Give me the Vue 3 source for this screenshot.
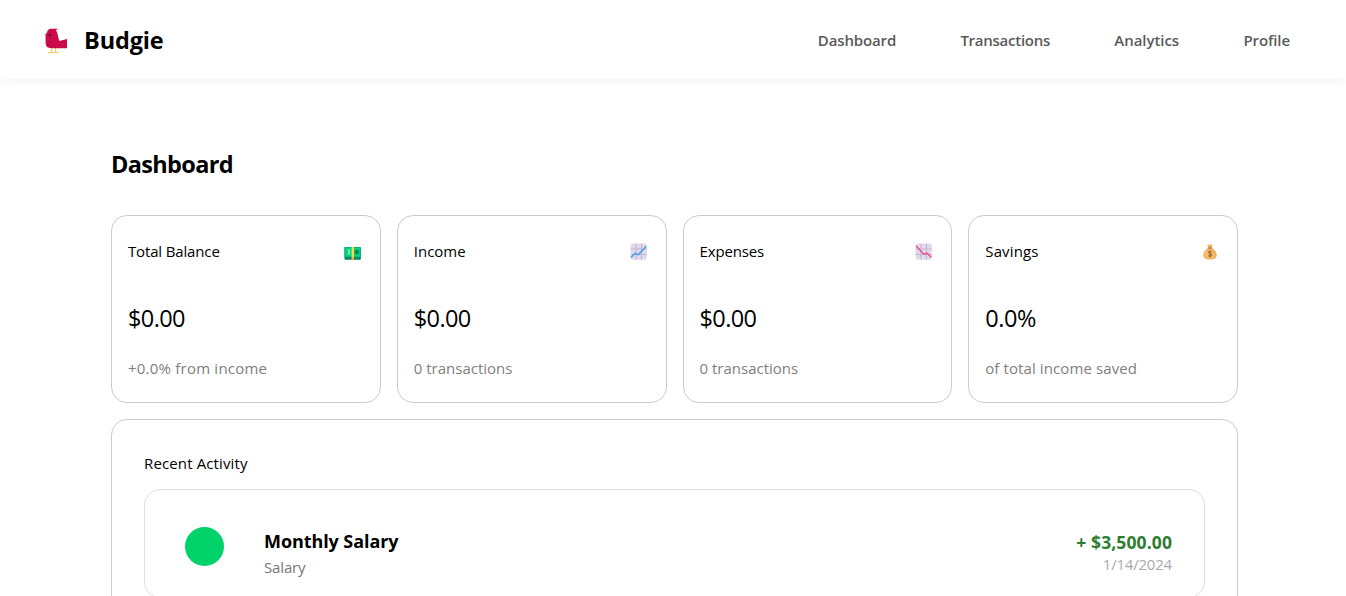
<script setup>
const links = [
  { label: 'Dashboard', cls: 'n-dashboard' },
  { label: 'Transactions', cls: 'n-transactions' },
  { label: 'Analytics', cls: 'n-analytics' },
  { label: 'Profile', cls: 'n-profile' },
]
const stats = [
  { title: 'Total Balance', value: '$0.00', note: '+0.0% from income', icon: 'cash' },
  { title: 'Income', value: '$0.00', note: '0 transactions', icon: 'up' },
  { title: 'Expenses', value: '$0.00', note: '0 transactions', icon: 'down' },
  { title: 'Savings', value: '0.0%', note: 'of total income saved', icon: 'bag' },
]
</script>

<template>
  <div class="page">
    <header class="topbar">
      <div class="brand">
        <svg class="logo" width="26" height="26" viewBox="0 0 26 26">
          <path d="M7.5 20V24.3M11.5 20V24.3M4 24.5H14.5" stroke="#ffc65c" stroke-width="1.2" fill="none" />
          <path d="M0.4 6.8L3.2 5V9Z" fill="#f5b04c" />
          <path d="M4 2.2Q5 .8 7 .8H14.3Q12.4 1.4 12.1 2.6Q13.4 4.5 14 8L15.2 13L23 11V19.5Q23 20.3 22.3 20.3H8.5Q2 20.3 1.6 15.4V8Q1.5 5.3 3.3 4.3Q3 2.8 4 2.2Z" fill="#cb0b49" />
          <circle cx="5.7" cy="7.3" r="1" fill="#391526" />
        </svg>
        <span class="brand-name">Budgie</span>
      </div>
      <nav class="nav">
        <a v-for="l in links" :key="l.label" :class="l.cls">{{ l.label }}</a>
      </nav>
    </header>

    <main class="content">
      <h1 class="title">Dashboard</h1>
      <section class="stats">
        <article v-for="s in stats" :key="s.title" class="card" :class="s.icon">
          <div class="card-head">
            <span class="label">{{ s.title }}</span>
            <svg class="icon" width="18" height="18" viewBox="0 0 18 18">
              <g v-if="s.icon === 'cash'">
                <rect x=".5" y="3" width="16.3" height="12.8" rx=".8" fill="#008463" />
                <rect x=".5" y="3" width="16.3" height="10.2" rx=".8" fill="#00b77b" />
                <rect x="1.5" y="4" width="14.3" height="8.2" fill="#00d983" />
                <circle cx="12.8" cy="8" r="2.4" fill="#008463" />
                <path d="M6.2 6.3C4.4 5.6 3.7 7.7 5.1 8.3S5.5 10.5 3.8 9.9M5 5.5V10.9" stroke="#8df5c3" stroke-width=".9" fill="none" />
                <rect x="7.6" y="3" width="2.4" height="10.2" fill="#fcd53f" />
                <rect x="7.6" y="13" width="2.4" height="2.8" fill="#f5b83d" />
              </g>
              <g v-else-if="s.icon === 'bag'">
                <path d="M6.2 1.5Q7.5 2.2 9 1.2Q10.5 2.2 11.8 1.5L10.8 4.7Q16 8.3 15.8 12.3Q15.5 16.5 9 16.5T2.2 12.3Q2 8.3 7.2 4.7Z" fill="#f0b060" />
                <path d="M3 12Q3.5 8 7.8 6.2Q12 7 13 12Q13 15 9 15.3Q4 15.2 3 12Z" fill="#f9c86c" fill-opacity=".6" />
                <path d="M7 5H11" stroke="#a56953" stroke-width="1" />
                <path d="M10.7 9C9.8 8 7.4 8 7.4 9.4C7.4 11.1 10.7 10.3 10.7 12.1C10.7 13.5 8.1 13.6 7.2 12.6M9 7.4V14.2" stroke="#8b513c" stroke-width=".9" fill="none" />
              </g>
              <g v-else>
                <rect x=".6" y=".6" width="16.2" height="16.2" rx="2.4" fill="#e1d8ec" />
                <path d="M6 .6V16.8M11.5 .6V16.8M.6 6H16.8M.6 11.5H16.8" stroke="#c2b2d0" stroke-width=".9" />
                <path v-if="s.icon === 'up'" d="M1 14.5L4.9 10.6Q5.5 10.2 6.1 10.6L7.5 11.5Q8.2 11.8 8.8 11.2L16.2 3.3" stroke="#3f9fe5" stroke-width="1.4" fill="none" />
                <path v-else d="M1.2 3L8.2 10.6Q8.8 11.3 9.5 11L11.2 10.2Q11.9 9.9 12.5 10.5L16.2 14.3" stroke="#f1467a" stroke-width="1.4" fill="none" />
              </g>
            </svg>
          </div>
          <div class="value">{{ s.value }}</div>
          <div class="note">{{ s.note }}</div>
        </article>
      </section>

      <section class="activity">
        <div class="activity-title">Recent Activity</div>
        <div class="entry">
          <div class="dot"></div>
          <div class="entry-info">
            <div class="entry-name">Monthly Salary</div>
            <div class="entry-cat">Salary</div>
          </div>
          <div class="entry-amount">
            <div class="amount">+ $3,500.00</div>
            <div class="date">1/14/2024</div>
          </div>
        </div>
      </section>
    </main>
  </div>
</template>

<style>
html, body { margin: 0; background: #fff; overflow: hidden; }
</style>

<style scoped>
.page {
  height: 596px;
  overflow: hidden;
  font-family: "Open Sans", "Noto Sans", sans-serif;
  font-size: 15px;
  line-height: 21px;
  color: #000;
}
.topbar {
  height: 79px;
  box-sizing: border-box;
  padding: 0 56px 0 44px;
  display: flex;
  align-items: center;
  justify-content: space-between;
  box-shadow: 0 2px 10px rgba(0, 0, 0, .05);
}
.brand { display: flex; align-items: center; gap: 14px; }
.logo { display: block; margin-top: 2px; }
.brand-name { font-size: 23.5px; font-weight: 700; line-height: 32px; letter-spacing: -.15px; }
.nav { display: flex; gap: 64.3px; font-weight: 600; color: #5a5a5a; padding-top: 2px; }
.n-dashboard { letter-spacing: -.14px; }
.n-transactions { letter-spacing: -.26px; }
.n-analytics { letter-spacing: -.05px; }
.n-profile { letter-spacing: -.1px; }
.content { padding: 69px 108px 0 111px; }
.title { margin: 0; font-size: 23.5px; line-height: 32px; font-weight: 700; letter-spacing: -.65px; }
.stats { display: grid; grid-template-columns: repeat(4, 1fr); gap: 16px; margin-top: 35px; }
.card {
  box-sizing: border-box;
  height: 188px;
  border: 1px solid #ccc;
  border-radius: 16px;
  padding: 25px 18px 0 16px;
}
.card-head { display: flex; justify-content: space-between; }
.icon { display: block; margin-top: 2px; }
.cash .icon { margin-top: 3px; }
.cash .label, .down .label { letter-spacing: -.15px; }
.bag .label { letter-spacing: .15px; }
.value { font-size: 23.5px; line-height: 32px; margin-top: 40px; letter-spacing: -.6px; }
.bag .value { letter-spacing: -.4px; }
.note { color: #808080; margin-top: 24px; }
.cash .note { letter-spacing: .22px; }
.bag .note { letter-spacing: .1px; }
.activity { border: 1px solid #ccc; border-radius: 16px; margin-top: 16px; padding: 33px 32px; height: 300px; }
.activity-title { letter-spacing: .13px; }
.entry {
  box-sizing: border-box;
  height: 109px;
  border: 1px solid #e0e0e0;
  border-radius: 16px;
  margin-top: 15px;
  padding: 36px 32px 0 40px;
  display: flex;
  align-items: flex-start;
}
.dot { width: 39px; height: 39px; margin-top: .5px; border-radius: 50%; background: #00d26a; }
.entry-info { margin-left: 40px; flex: 1; padding-top: 3px; }
.entry-name { font-size: 18px; font-weight: 700; line-height: 24px; letter-spacing: -.08px; }
.entry-cat { color: #777; margin-top: 4px; letter-spacing: -.15px; }
.entry-amount { text-align: right; padding-top: 4px; }
.amount { font-size: 17.5px; font-weight: 700; line-height: 24px; color: #2e7d32; letter-spacing: .1px; }
.date { color: #aaa; line-height: 20px; letter-spacing: -.2px; }
</style>
